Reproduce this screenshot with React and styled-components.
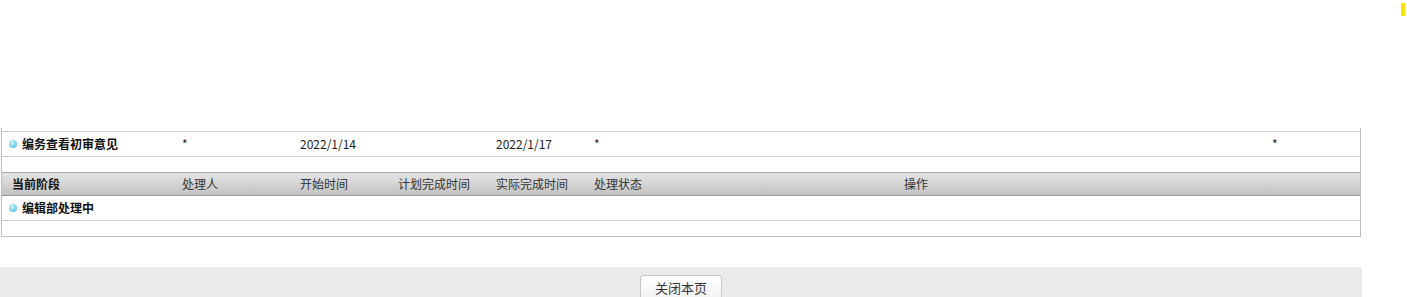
import React from "react";
import styled, { createGlobalStyle } from "styled-components";

const Global = createGlobalStyle`
  html, body { margin: 0; padding: 0; background: #fff; }
  body { font-family: "Noto Sans CJK SC", "Noto Sans", sans-serif; font-size: 12px; color: #222; }
`;

const Page = styled.div`
  position: relative;
  width: 1407px;
  padding-top: 128px;
`;

const Marker = styled.div`
  position: absolute;
  top: 3px;
  left: 1401px;
  width: 4px;
  height: 13px;
  background: #ffe400;
`;

const Panel = styled.div`
  margin-left: 1px;
  width: 1358px;
  border: 1px solid #bdbdbd;
  border-top: none;
  padding-top: 3px;
`;

const Row = styled.div`
  display: grid;
  grid-template-columns: ${(p) => p.$cols};
  align-items: center;
  height: 23px;
  padding-bottom: 1px;
  padding-left: 10px;
  border-top: ${(p) => (p.$top ? "1px solid #cfcfcf" : "none")};
  border-bottom: 1px solid #cfcfcf;
  line-height: 16px;
`;

const Spacer = styled.div`
  height: 15px;
`;

const Header = styled.div`
  display: grid;
  grid-template-columns: ${(p) => p.$cols};
  align-items: center;
  height: 22px;
  padding-left: 10px;
  border-top: 1px solid #a9a9a9;
  border-bottom: 1px solid #979797;
  background: linear-gradient(to bottom, #e4e4e4 0%, #d4d4d4 50%, #c2c2c2 100%);
  color: #333;
  line-height: 16px;
`;

const HeadCell = styled.div`
  font-weight: ${(p) => (p.$bold ? 700 : 400)};
  color: ${(p) => (p.$bold ? "#111" : "#333")};
  white-space: nowrap;
`;

const Cell = styled.div`
  white-space: nowrap;
  color: #222;
`;

const NameCell = styled.div`
  display: flex;
  align-items: center;
  gap: 5px;
  margin-left: -3px;
  font-weight: 700;
  color: #111;
  white-space: nowrap;
`;

const Dot = styled.span`
  display: inline-block;
  width: 8px;
  height: 8px;
  border-radius: 50%;
  background: radial-gradient(circle at 40% 35%, #d8f6ff 0%, #86d8f2 45%, #4fbde3 100%);
`;

const Footer = styled.div`
  margin-top: 30px;
  width: 1362px;
  height: 30px;
  background: #ebebeb;
  display: flex;
  justify-content: center;
  padding-top: 8px;
  box-sizing: border-box;
  overflow: hidden;
`;

const Button = styled.button`
  width: 82px;
  height: 26px;
  border: 1px solid #c6c6c6;
  border-radius: 3px;
  background: linear-gradient(to bottom, #ffffff 0%, #f2f2f2 100%);
  font-family: "Noto Sans CJK SC", sans-serif;
  font-size: 13px;
  color: #333;
  padding: 0;
  line-height: 22px;
  align-self: flex-start;
`;

const rowCols = "170px 118px 98px 98px 98px 678px 1fr";
const headCols = "170px 118px 98px 98px 98px 310px 1fr";

export default function App() {
  return (
    <>
      <Global />
      <Page>
        <Marker />
        <Panel>
          <Row $top $cols={rowCols}>
            <NameCell><Dot />编务查看初审意见</NameCell>
            <Cell>*</Cell>
            <Cell>2022/1/14</Cell>
            <Cell></Cell>
            <Cell>2022/1/17</Cell>
            <Cell>*</Cell>
            <Cell>*</Cell>
          </Row>
          <Spacer />
          <Header $cols={headCols}>
            <HeadCell $bold>当前阶段</HeadCell>
            <HeadCell>处理人</HeadCell>
            <HeadCell>开始时间</HeadCell>
            <HeadCell>计划完成时间</HeadCell>
            <HeadCell>实际完成时间</HeadCell>
            <HeadCell>处理状态</HeadCell>
            <HeadCell>操作</HeadCell>
          </Header>
          <Row $cols={headCols}>
            <NameCell><Dot />编辑部处理中</NameCell>
          </Row>
          <Spacer />
        </Panel>
        <Footer>
          <Button>关闭本页</Button>
        </Footer>
      </Page>
    </>
  );
}
